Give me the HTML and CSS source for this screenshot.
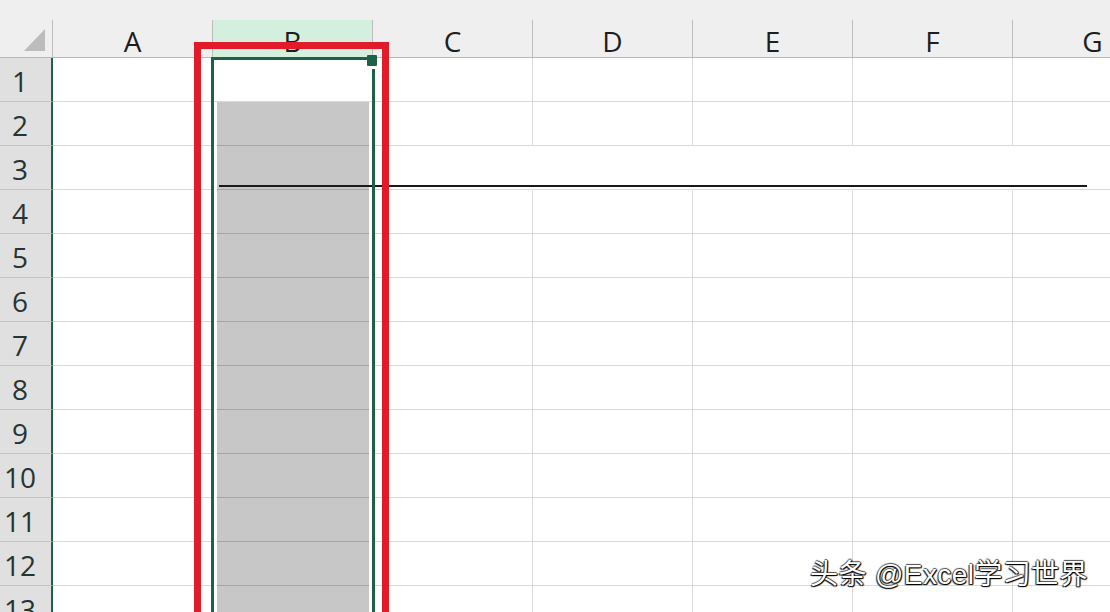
FILE: index.html
```html
<!DOCTYPE html>
<html>
<head>
<meta charset="utf-8">
<link rel="stylesheet" href="styles.css">
</head>
<body>
<div class="sheet">
  <div class="topband"></div>
  <div class="colhead">
    <div class="corner">
      <svg width="52" height="37" viewBox="0 0 52 37"><polygon points="45,9 45,31 24,31" fill="#bcbcbc"/></svg>
    </div>
    <div class="ch">A</div>
    <div class="ch sel">B</div>
    <div class="ch">C</div>
    <div class="ch">D</div>
    <div class="ch">E</div>
    <div class="ch">F</div>
    <div class="ch">G</div>
  </div>

  <div class="row"><div class="rh">1</div><div class="c"></div><div class="c"></div><div class="c"></div><div class="c"></div><div class="c"></div><div class="c"></div><div class="c"></div></div>
  <div class="row"><div class="rh">2</div><div class="c"></div><div class="c fill"><div class="g"></div></div><div class="c"></div><div class="c"></div><div class="c"></div><div class="c"></div><div class="c"></div></div>
  <div class="row r3"><div class="rh">3</div><div class="c"></div><div class="c fill"><div class="g"></div></div><div class="c nv"></div><div class="c nv"></div><div class="c nv"></div><div class="c nv"></div><div class="c nv"></div></div>
  <div class="row"><div class="rh">4</div><div class="c"></div><div class="c fill"><div class="g"></div></div><div class="c"></div><div class="c"></div><div class="c"></div><div class="c"></div><div class="c"></div></div>
  <div class="row"><div class="rh">5</div><div class="c"></div><div class="c fill"><div class="g"></div></div><div class="c"></div><div class="c"></div><div class="c"></div><div class="c"></div><div class="c"></div></div>
  <div class="row"><div class="rh">6</div><div class="c"></div><div class="c fill"><div class="g"></div></div><div class="c"></div><div class="c"></div><div class="c"></div><div class="c"></div><div class="c"></div></div>
  <div class="row"><div class="rh">7</div><div class="c"></div><div class="c fill"><div class="g"></div></div><div class="c"></div><div class="c"></div><div class="c"></div><div class="c"></div><div class="c"></div></div>
  <div class="row"><div class="rh">8</div><div class="c"></div><div class="c fill"><div class="g"></div></div><div class="c"></div><div class="c"></div><div class="c"></div><div class="c"></div><div class="c"></div></div>
  <div class="row"><div class="rh">9</div><div class="c"></div><div class="c fill"><div class="g"></div></div><div class="c"></div><div class="c"></div><div class="c"></div><div class="c"></div><div class="c"></div></div>
  <div class="row"><div class="rh">10</div><div class="c"></div><div class="c fill"><div class="g"></div></div><div class="c"></div><div class="c"></div><div class="c"></div><div class="c"></div><div class="c"></div></div>
  <div class="row"><div class="rh">11</div><div class="c"></div><div class="c fill"><div class="g"></div></div><div class="c"></div><div class="c"></div><div class="c"></div><div class="c"></div><div class="c"></div></div>
  <div class="row"><div class="rh">12</div><div class="c"></div><div class="c fill"><div class="g"></div></div><div class="c"></div><div class="c"></div><div class="c"></div><div class="c"></div><div class="c"></div></div>
  <div class="row"><div class="rh">13</div><div class="c"></div><div class="c fill"><div class="g"></div></div><div class="c"></div><div class="c"></div><div class="c"></div><div class="c"></div><div class="c"></div></div>

  <div class="hline"></div>
  <div class="selection"></div>
  <div class="handle"></div>
  <div class="redbox"></div>
  <div class="watermark">头条 @Excel学习世界</div>
</div>
</body>
</html>
```

FILE: styles.css
```css
html, body {
  margin: 0;
  padding: 0;
  background: #ffffff;
}
body {
  width: 1110px;
  height: 612px;
  overflow: hidden;
}
.sheet {
  position: relative;
  width: 1110px;
  height: 612px;
  overflow: hidden;
  font-family: "Open Sans", "Noto Sans", sans-serif;
}
.topband {
  height: 20px;
  background: #efefef;
}
.colhead {
  display: flex;
  height: 38px;
  background: #efefef;
  border-bottom: 1px solid #b8b8b8;
  box-sizing: border-box;
}
.corner {
  flex: none;
  width: 53px;
  border-right: 1px solid #bcbcbc;
  box-sizing: border-box;
}
.corner svg {
  display: block;
}
.ch {
  flex: none;
  width: 160px;
  border-right: 1px solid #bcbcbc;
  box-sizing: border-box;
  display: flex;
  align-items: center;
  justify-content: center;
  font-size: 28px;
  line-height: 1;
  color: #1e1e1e;
  padding-top: 4px;
}
.ch.sel {
  background: #d3efdd;
}
.row {
  display: flex;
  height: 44px;
}
.rh {
  flex: none;
  width: 53px;
  height: 44px;
  box-sizing: border-box;
  background: #e0e0e0;
  border-right: 2px solid #1f6048;
  border-bottom: 1px solid #c4c4c4;
  display: flex;
  align-items: center;
  justify-content: center;
  padding-right: 11px;
  padding-top: 3px;
  font-size: 28px;
  line-height: 1;
  color: #263434;
}
.c {
  flex: none;
  width: 160px;
  height: 44px;
  box-sizing: border-box;
  border-right: 1px solid #d9d9d9;
  border-bottom: 1px solid #d9d9d9;
}
.c.nv {
  border-right-color: transparent;
}
.c.fill {
  border-bottom: none;
  padding: 0 3px 0 4px;
}
.c.fill .g {
  height: 44px;
  box-sizing: border-box;
  background: #c7c7c7;
  border-bottom: 1px solid #a6a6a6;
}
.hline {
  position: absolute;
  left: 219px;
  top: 185px;
  width: 868px;
  height: 2px;
  background: #1a1a1a;
}
.selection {
  position: absolute;
  left: 211px;
  top: 57px;
  width: 164px;
  height: 620px;
  box-sizing: border-box;
  border: 3px solid #1f6048;
}
.handle {
  position: absolute;
  left: 367px;
  top: 55px;
  width: 10px;
  height: 11px;
  background: #1f6048;
  box-shadow: 0 3px 0 #ffffff;
  border-radius: 1px;
}
.redbox {
  position: absolute;
  left: 194px;
  top: 42px;
  width: 195px;
  height: 700px;
  box-sizing: border-box;
  border: 7px solid #e11b2a;
}
.watermark {
  position: absolute;
  left: 810px;
  top: 561px;
  font-family: "Liberation Sans", "Noto Sans CJK SC", sans-serif;
  font-size: 28px;
  letter-spacing: 0.4px;
  line-height: 1;
  color: #ffffff;
  white-space: nowrap;
  text-shadow: 1px 1px 1px #000, -1px 1px 1px #222, 1px 0 1px #222, 0 -1px 1px #555;
}
```
